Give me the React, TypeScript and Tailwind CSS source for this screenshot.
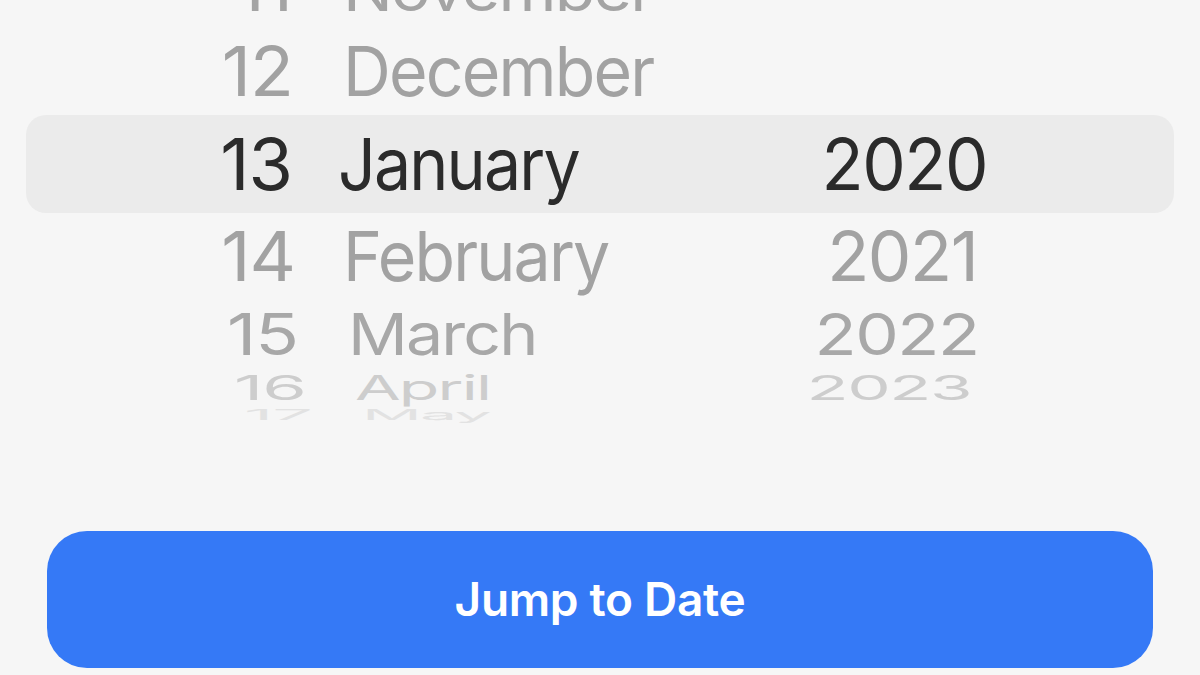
import React from "react";

type Row = {
  day: string;
  month: string;
  year: string;
  row: string;
  text: string;
  day_t: string;
  month_t: string;
  year_t: string;
};

const rows: Row[] = [
  { day: "11", month: "November", year: "", row: "h-[78px] -mt-[49px]", text: "text-[#a4a4a4] scale-y-[0.8]", day_t: "", month_t: "translate-x-[5px]", year_t: "" },
  { day: "12", month: "December", year: "", row: "h-[83px]", text: "text-[#a2a2a2] scale-y-[0.95]", day_t: "translate-x-[1px]", month_t: "translate-x-[5px]", year_t: "" },
  { day: "14", month: "February", year: "2021", row: "h-[80px]", text: "text-[#a2a2a2] scale-y-[0.96]", day_t: "translate-x-[3px]", month_t: "translate-x-[5px]", year_t: "-translate-x-[2px]" },
  { day: "15", month: "March", year: "2022", row: "h-[76px]", text: "text-[#a8a8a8] scale-y-[0.8]", day_t: "translate-x-[6px]", month_t: "translate-x-[10px]", year_t: "-translate-x-[7px]" },
  { day: "16", month: "April", year: "2023", row: "h-[32px]", text: "text-[#cdcdcd] scale-y-[0.47]", day_t: "translate-x-[14px]", month_t: "translate-x-[17px]", year_t: "-translate-x-[15px]" },
  { day: "17", month: "May", year: "", row: "h-[22px]", text: "text-[#e2e2e2] scale-y-[0.2]", day_t: "translate-x-[20px]", month_t: "translate-x-[24px]", year_t: "" },
];

function PickerRow({ r }: { r: Row }) {
  return (
    <div className={`flex items-center overflow-visible ${r.row}`}>
      <div className={`w-[292px] shrink-0 text-right leading-none tracking-[-1px] ${r.text}`}>
        <span className={`inline-block ${r.day_t}`}>{r.day}</span>
      </div>
      <div className={`ml-[46px] w-[400px] shrink-0 leading-none ${r.text}`}>
        <span className={`inline-block origin-left scale-x-[0.92] tracking-[-2px] ${r.month_t}`}>{r.month}</span>
      </div>
      <div className={`w-[332px] shrink-0 text-center leading-none ${r.text}`}>
        <span className={`inline-block origin-center scale-x-[0.96] tracking-[-1.5px] ${r.year_t}`}>{r.year}</span>
      </div>
    </div>
  );
}

export default function App() {
  return (
    <div
      className="w-[1200px] h-[675px] overflow-hidden bg-[#f6f6f6] flex flex-col"
      style={{ fontFamily: "Inter, 'Noto Sans', sans-serif" }}
    >
      <div className="text-[72px] h-[426px] shrink-0">
        <PickerRow r={rows[0]} />
        <PickerRow r={rows[1]} />
        <div className="h-[104px] py-[3px]">
          <div className="mx-[26px] h-[98px] rounded-[20px] bg-[#ebebeb] flex items-center text-[#2b2b2b] leading-none">
            <div className="w-[266px] shrink-0 text-right tracking-[-1px]">13</div>
            <div className="ml-[46px] w-[400px] shrink-0">
              <span className="inline-block origin-left scale-x-[0.92] tracking-[-2px]">January</span>
            </div>
            <div className="w-[332px] shrink-0 text-center">
              <span className="inline-block origin-center scale-x-[0.96] tracking-[-1.5px]">2020</span>
            </div>
          </div>
        </div>
        <PickerRow r={rows[2]} />
        <PickerRow r={rows[3]} />
        <PickerRow r={rows[4]} />
        <PickerRow r={rows[5]} />
      </div>
      <div className="flex-1 flex flex-col justify-end pb-[7px] px-[47px]">
        <button className="h-[137px] w-full rounded-[40px] bg-[#3579f6] text-white text-[46px] font-semibold tracking-[-0.3px] flex items-center justify-center">
          Jump to Date
        </button>
      </div>
    </div>
  );
}
